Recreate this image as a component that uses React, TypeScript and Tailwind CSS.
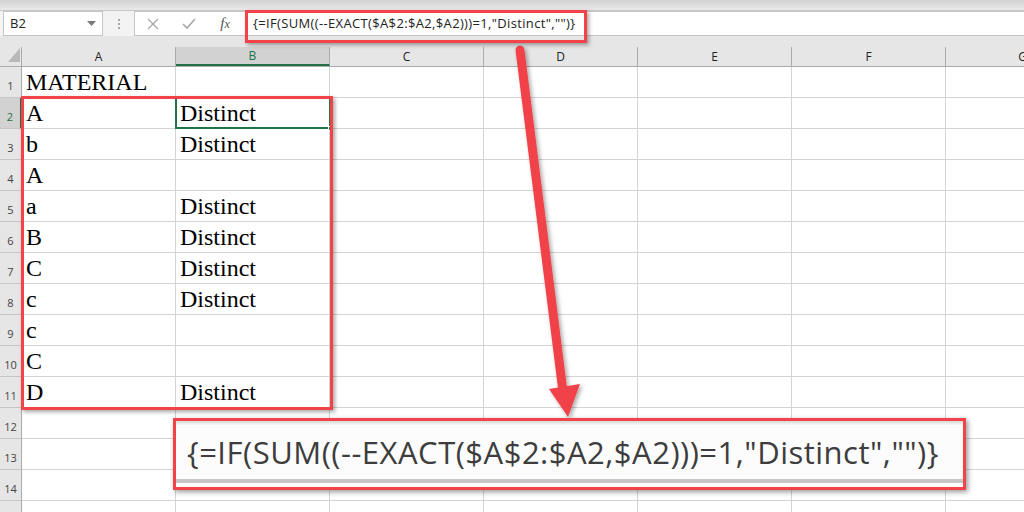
import React from 'react';

const COLS = ['A', 'B', 'C', 'D', 'E', 'F', 'G'];
const FORMULA = '{=IF(SUM((--EXACT($A$2:$A2,$A2)))=1,"Distinct","")}';

// cell values, rows 1..15
const DATA: [string, string][] = [
  ['MATERIAL', ''],
  ['A', 'Distinct'],
  ['b', 'Distinct'],
  ['A', ''],
  ['a', 'Distinct'],
  ['B', 'Distinct'],
  ['C', 'Distinct'],
  ['c', 'Distinct'],
  ['c', ''],
  ['C', ''],
  ['D', 'Distinct'],
  ['', ''],
  ['', ''],
  ['', ''],
  ['', ''],
];

function FormulaBar() {
  return (
    <div className="flex h-[25px] bg-[#f3f3f3]">
      <div className="ml-[3px] w-[100px] h-full bg-white border border-[#c6c6c6] flex items-center justify-between pl-[6px] pr-[6px]">
        <span className="text-[13px] text-[#222]">B2</span>
        <svg width="9" height="5" viewBox="0 0 9 5">
          <path d="M0 0h9L4.5 5z" fill="#7a7a7a" />
        </svg>
      </div>
      <div className="w-[31px] flex items-center justify-center">
        <div className="flex flex-col gap-[2px]">
          <span className="w-[2px] h-[2px] bg-[#a8a8a8]" />
          <span className="w-[2px] h-[2px] bg-[#a8a8a8]" />
          <span className="w-[2px] h-[2px] bg-[#a8a8a8]" />
        </div>
      </div>
      <div className="flex-1 h-full bg-white border border-[#c6c6c6] border-r-0 flex items-center">
        <div className="w-[36px] flex justify-center">
          <svg width="12" height="12" viewBox="0 0 12 12">
            <path d="M1 1l10 10M11 1L1 11" stroke="#a6a6a6" strokeWidth="1.3" />
          </svg>
        </div>
        <div className="w-[36px] flex justify-center">
          <svg width="14" height="11" viewBox="0 0 14 11">
            <path d="M1 6l4 4 8-9" stroke="#a6a6a6" strokeWidth="1.6" fill="none" />
          </svg>
        </div>
        <div className="w-[36px] flex justify-center">
          <span className="font-['Liberation_Serif'] italic text-[15px] text-[#555] leading-none">
            f<span className="text-[12px]">x</span>
          </span>
        </div>
        <span className="ml-[10px] text-[13px] text-[#222] font-['Open_Sans'] tracking-[0.35px]">{FORMULA}</span>
      </div>
    </div>
  );
}

function ColumnHeaders() {
  return (
    <div className="bg-[#e6e6e6] pt-[11px] border-b border-[#ababab]">
      <div className="flex h-[19px]">
        <div className="w-[22px] shrink-0 relative border-r border-[#ababab]">
          <svg className="absolute left-[8px] top-[1px]" width="12" height="14" viewBox="0 0 12 14">
            <path d="M12 0v14H0z" fill="#b8b8b8" />
          </svg>
        </div>
        {COLS.map((c) => (
          <div
            key={c}
            className={
              c === 'B'
                ? 'w-[154px] shrink-0 flex items-center justify-center bg-[#d2d2d2] border-r border-[#ababab] border-b-2 border-b-[#217346] text-[12px] text-[#217346]'
                : 'w-[154px] shrink-0 flex items-center justify-center border-r border-[#ababab] text-[12px] text-[#222]'
            }
          >
            {c}
          </div>
        ))}
      </div>
    </div>
  );
}

function Row({ n, a, b }: { n: number; a: string; b: string }) {
  const sel = n === 2;
  return (
    <div className="flex h-[31px]">
      <div
        className={
          sel
            ? 'w-[22px] shrink-0 bg-[#d2d2d2] border-b border-[#c6c6c6] border-r-2 border-r-[#217346] flex items-end justify-center pb-[3px] text-[11px] text-[#217346]'
            : 'w-[22px] shrink-0 bg-[#e6e6e6] border-b border-[#c6c6c6] border-r border-r-[#ababab] flex items-end justify-center pb-[3px] text-[11px] text-[#444]'
        }
      >
        {n}
      </div>
      {COLS.map((c, i) => (
        <div
          key={c}
          className="w-[154px] shrink-0 border-r border-b border-[#d4d4d4] flex items-end pl-[4px] font-['Liberation_Serif'] text-[24px] leading-[30px] text-black"
        >
          {i === 0 ? a : i === 1 ? b : ''}
        </div>
      ))}
    </div>
  );
}

export default function App() {
  return (
    <div className="w-[1024px] h-[512px] overflow-hidden relative bg-white font-['Open_Sans']">
      <div className="h-[11px] bg-gradient-to-b from-[#d2d2d2] to-[#e9e9e9] border-b border-[#c6c6c6]" />
      <FormulaBar />
      <ColumnHeaders />
      <div>
        {DATA.map(([a, b], i) => (
          <Row key={i} n={i + 1} a={a} b={b} />
        ))}
      </div>

      {/* selected cell B2 */}
      <div className="absolute left-[175px] top-[96px] w-[156px] h-[33px] border-2 border-[#217346]" />
      <div className="absolute left-[328px] top-[126px] w-[5px] h-[5px] bg-[#217346] border border-white" />

      {/* highlight boxes */}
      <div className="absolute left-[245px] top-[10px] w-[342px] h-[33px] border-[3px] border-[#f2434a] shadow-[2px_2px_4px_rgba(0,0,0,0.35)]" />
      <div className="absolute left-[21px] top-[96px] w-[312px] h-[314px] border-[3px] border-[#f2434a] shadow-[2px_2px_4px_rgba(0,0,0,0.35)]" />

      {/* arrow */}
      <svg className="absolute left-0 top-0 pointer-events-none" width="1024" height="512" viewBox="0 0 1024 512">
        <defs>
          <filter id="sh" x="-20%" y="-20%" width="140%" height="140%">
            <feDropShadow dx="2" dy="2" stdDeviation="2" floodColor="#000" floodOpacity="0.35" />
          </filter>
        </defs>
        <g filter="url(#sh)">
          <line x1="520" y1="50" x2="563" y2="392" stroke="#f2434a" strokeWidth="9" strokeLinecap="round" />
          <path d="M549 389L580 384L568 417Z" fill="#f2434a" />
        </g>
      </svg>

      {/* zoomed formula callout */}
      <div className="absolute left-[173px] top-[418px] w-[793px] h-[72px] border-[3px] border-[#f2434a] bg-white shadow-[2px_2px_5px_rgba(0,0,0,0.4)] flex flex-col">
        <div className="h-[4px] bg-gradient-to-b from-[#d8d8d8] to-[#f7f7f7]" />
        <div className="flex-1 flex items-center pl-[11px] bg-[#fcfcfc]">
          <span className="text-[31px] text-[#3d3d3d] font-['Open_Sans'] leading-none tracking-[0.5px]">{FORMULA}</span>
        </div>
        <div className="h-[4px] bg-[#c6c6c6]" />
        <div className="h-[4px] bg-white" />
      </div>
    </div>
  );
}
